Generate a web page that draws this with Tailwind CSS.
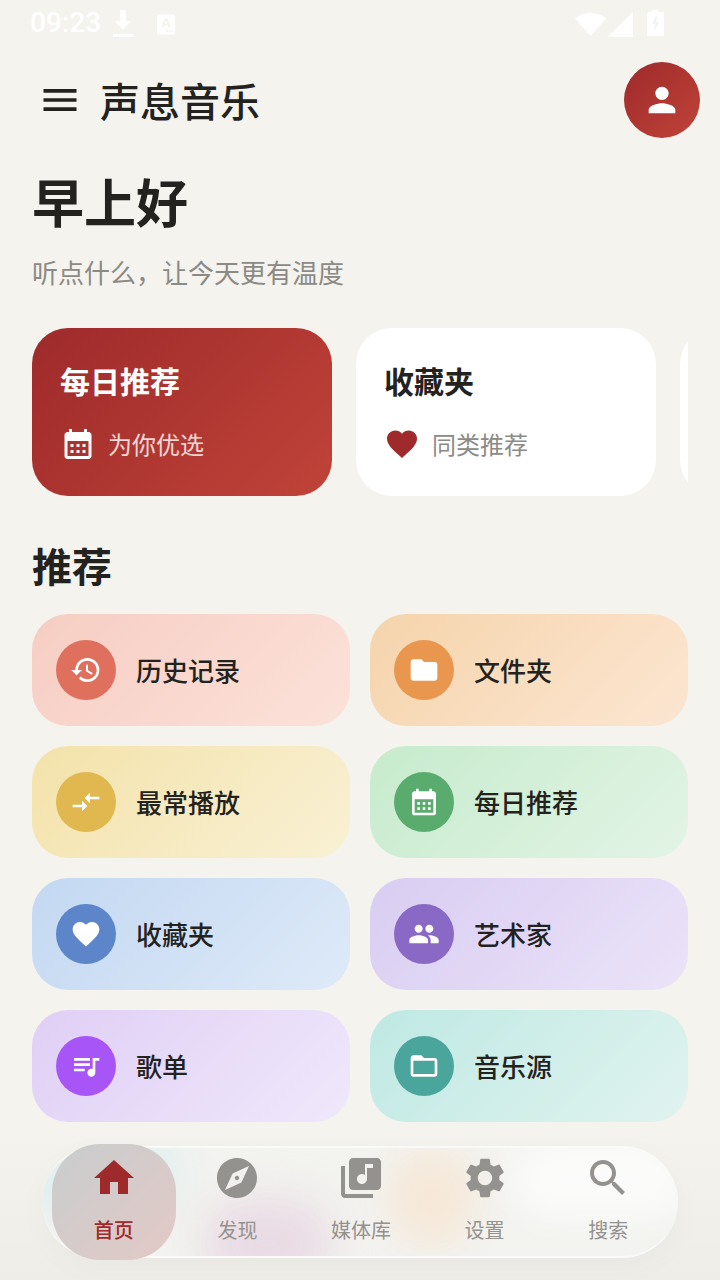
<!DOCTYPE html>
<html lang="zh-CN">
<head>
    <meta charset="UTF-8">
    <meta name="viewport" content="width=device-width, initial-scale=1.0">
    <title>声息音乐</title>
    <script src="https://cdn.jsdelivr.net/npm/@tailwindcss/browser@4"></script>
</head>
<body class="bg-[#f4f3ee]">
<div class="relative w-[720px] h-[1280px] overflow-hidden bg-[#f4f3ee] text-[#23221e] font-['Roboto','Noto_Sans_CJK_SC',sans-serif]">

    <!-- Status bar -->
    <div class="h-[46px] flex items-center pl-[30px] pr-[56px] text-white">
        <span class="text-[28px] leading-[46px] w-[80px] font-medium">09:23</span>
        <svg class="w-[26px] h-[28px] mt-[2px]" viewBox="0 0 26 28" fill="currentColor"><path d="M10 0h6v11h5l-8 9-8-9h5zM3 24h20v3H3z"/></svg>
        <svg class="w-[18px] h-[21px] ml-[21px] mt-[3px]" viewBox="0 0 20 22" fill="currentColor"><path fill-rule="evenodd" d="M2 0h16a2 2 0 0 1 2 2v18a2 2 0 0 1-2 2H2a2 2 0 0 1-2-2V2a2 2 0 0 1 2-2zm6.6 4L5 14h2.2l.7-2h4.2l.7 2H15L11.400 4zm1.400 2.500 1.400 3.900H8.600zM10 17v2h2v-2zm3 0v2h2v-2zm3 0v2h2v-2z"/></svg>
        <div class="flex-1"></div>
        <svg class="w-[31px] h-[23px] mt-[3px]" viewBox="0 0 31 23" fill="currentColor"><path d="M15.500 0C9.500 0 4 2.200 0 5.500L15.500 23 31 5.500C27 2.200 21.500 0 15.500 0z"/></svg>
        <svg class="w-[26px] h-[25px] ml-[2px] mt-[2px]" viewBox="0 0 26 25" fill="currentColor"><path d="M25 0v25H0z"/></svg>
        <svg class="w-[18px] h-[26px] ml-[12px] mt-[-1px]" viewBox="0 0 18 26" fill="currentColor"><path fill-rule="evenodd" d="M6 0h6v2h4a2 2 0 0 1 2 2v22H1V4a2 2 0 0 1 2-2h3zM10 6 6 14h3l-1 7 5-9h-3l1-6z"/></svg>
    </div>

    <!-- Header -->
    <header class="mt-[16px] h-[76px] flex items-center pl-[38px] pr-[20px]">
        <svg class="w-[44px] h-[44px]" viewBox="0 0 24 24" fill="currentColor"><path d="M3 18h18v-2H3v2zm0-5h18v-2H3v2zm0-7v2h18V6H3z"/></svg>
        <h1 class="ml-[18px] text-[40px] leading-[56px] font-medium mt-[8px]">声息音乐</h1>
        <div class="ml-auto w-[76px] h-[76px] rounded-full bg-linear-135 from-[#9e2a2b] to-[#c04338] flex items-center justify-center">
            <svg class="w-[40px] h-[40px] text-white" viewBox="0 0 24 24" fill="currentColor"><path d="M12 12c2.210 0 4-1.790 4-4s-1.790-4-4-4-4 1.790-4 4 1.790 4 4 4zm0 2c-2.670 0-8 1.340-8 4v2h16v-2c0-2.660-5.330-4-8-4z"/></svg>
        </div>
    </header>

    <main class="px-[32px]">
        <h2 class="mt-[32px] text-[52px] leading-[72px] font-bold">早上好</h2>
        <p class="mt-[14px] text-[26px] leading-[36px] text-[#8b8a85]">听点什么，让今天更有温度</p>

        <!-- Featured cards -->
        <div class="mt-[36px] flex gap-[24px] overflow-hidden">
            <div class="w-[300px] h-[168px] shrink-0 rounded-[36px] pl-[28px] pt-[33px] bg-linear-135 from-[#9e2a2b] to-[#c04338] text-white">
                <div class="text-[30px] leading-[44px] font-bold">每日推荐</div>
                <div class="mt-[19px] flex items-center gap-[12px] text-[24px] leading-[36px] text-white/80">
                    <svg class="w-[36px] h-[36px] text-white" viewBox="0 0 24 24" fill="currentColor"><path d="M19 4h-1V2h-2v2H8V2H6v2H5c-1.100 0-2 .9-2 2v14c0 1.100.9 2 2 2h14c1.100 0 2-.9 2-2V6c0-1.100-.9-2-2-2zm0 16H5V10h14v10zM9 14H7v-2h2v2zm4 0h-2v-2h2v2zm4 0h-2v-2h2v2zm-8 4H7v-2h2v2zm4 0h-2v-2h2v2zm4 0h-2v-2h2v2z"/></svg>
                    <span class="mt-[4px]">为你优选</span>
                </div>
            </div>
            <div class="w-[300px] h-[168px] shrink-0 rounded-[36px] pl-[28px] pt-[33px] bg-white">
                <div class="text-[30px] leading-[44px] font-bold">收藏夹</div>
                <div class="mt-[19px] flex items-center gap-[12px] text-[24px] leading-[36px] text-[#8b8a85]">
                    <svg class="w-[36px] h-[36px] text-[#9e2a2b]" viewBox="0 0 24 24" fill="currentColor"><path d="M12 21.350l-1.450-1.320C5.400 15.360 2 12.280 2 8.500 2 5.420 4.420 3 7.500 3c1.740 0 3.410.81 4.500 2.090C13.090 3.810 14.760 3 16.500 3 19.580 3 22 5.420 22 8.500c0 3.780-3.400 6.860-8.550 11.540L12 21.350z"/></svg>
                    <span class="mt-[4px]">同类推荐</span>
                </div>
            </div>
            <div class="w-[300px] h-[168px] shrink-0 rounded-[36px] bg-white"></div>
        </div>

        <h2 class="mt-[49px] text-[40px] leading-[48px] font-bold">推荐</h2>

        <!-- Recommend grid -->
        <div class="mt-[21px] grid grid-cols-2 gap-[20px]">
            <div class="h-[112px] rounded-[36px] flex items-center pl-[24px] gap-[20px] bg-linear-135 from-[#f6cdc3] to-[#fce2d9]">
                <div class="w-[60px] h-[60px] rounded-full bg-[#e0705e] flex items-center justify-center">
                    <svg class="w-[32px] h-[32px] text-white" viewBox="0 0 24 24" fill="currentColor"><path d="M13 3a9 9 0 0 0-9 9H1l3.890 3.890.07.14L9 12H6c0-3.870 3.130-7 7-7s7 3.130 7 7-3.130 7-7 7c-1.930 0-3.680-.79-4.940-2.060l-1.420 1.420A8.954 8.954 0 0 0 13 21a9 9 0 0 0 0-18zm-1 5v5l4.280 2.540.72-1.210-3.500-2.080V8H12z"/></svg>
                </div>
                <span class="mt-[4px] text-[26px] font-medium">历史记录</span>
            </div>
            <div class="h-[112px] rounded-[36px] flex items-center pl-[24px] gap-[20px] bg-linear-135 from-[#f5d4ab] to-[#fce6d2]">
                <div class="w-[60px] h-[60px] rounded-full bg-[#e9964f] flex items-center justify-center">
                    <svg class="w-[32px] h-[32px] text-white" viewBox="0 0 24 24" fill="currentColor"><path d="M10 4H4c-1.100 0-1.990.9-1.990 2L2 18c0 1.100.9 2 2 2h16c1.100 0 2-.9 2-2V8c0-1.100-.9-2-2-2h-8l-2-2z"/></svg>
                </div>
                <span class="mt-[4px] text-[26px] font-medium">文件夹</span>
            </div>
            <div class="h-[112px] rounded-[36px] flex items-center pl-[24px] gap-[20px] bg-linear-135 from-[#f3e2a9] to-[#f9f1d5]">
                <div class="w-[60px] h-[60px] rounded-full bg-[#e0b84f] flex items-center justify-center">
                    <svg class="w-[32px] h-[32px] text-white" viewBox="0 0 24 24" fill="currentColor"><path d="M9.010 14H2v2h7.010v3L13 15l-3.990-4v3zm5.980-1v-3H22V8h-7.010V5L11 9l3.990 4z"/></svg>
                </div>
                <span class="mt-[4px] text-[26px] font-medium">最常播放</span>
            </div>
            <div class="h-[112px] rounded-[36px] flex items-center pl-[24px] gap-[20px] bg-linear-135 from-[#c6ebcc] to-[#e3f4e6]">
                <div class="w-[60px] h-[60px] rounded-full bg-[#5aab6e] flex items-center justify-center">
                    <svg class="w-[32px] h-[32px] text-white" viewBox="0 0 24 24" fill="currentColor"><path d="M19 4h-1V2h-2v2H8V2H6v2H5c-1.100 0-2 .9-2 2v14c0 1.100.9 2 2 2h14c1.100 0 2-.9 2-2V6c0-1.100-.9-2-2-2zm0 16H5V10h14v10zM9 14H7v-2h2v2zm4 0h-2v-2h2v2zm4 0h-2v-2h2v2zm-8 4H7v-2h2v2zm4 0h-2v-2h2v2zm4 0h-2v-2h2v2z"/></svg>
                </div>
                <span class="mt-[4px] text-[26px] font-medium">每日推荐</span>
            </div>
            <div class="h-[112px] rounded-[36px] flex items-center pl-[24px] gap-[20px] bg-linear-135 from-[#c3d8f2] to-[#deeaf8]">
                <div class="w-[60px] h-[60px] rounded-full bg-[#5c86c9] flex items-center justify-center">
                    <svg class="w-[32px] h-[32px] text-white" viewBox="0 0 24 24" fill="currentColor"><path d="M12 21.350l-1.450-1.320C5.400 15.360 2 12.280 2 8.500 2 5.420 4.420 3 7.500 3c1.740 0 3.410.81 4.500 2.090C13.090 3.810 14.760 3 16.500 3 19.580 3 22 5.420 22 8.500c0 3.780-3.400 6.860-8.550 11.540L12 21.350z"/></svg>
                </div>
                <span class="mt-[4px] text-[26px] font-medium">收藏夹</span>
            </div>
            <div class="h-[112px] rounded-[36px] flex items-center pl-[24px] gap-[20px] bg-linear-135 from-[#d9cdf2] to-[#ebe3f8]">
                <div class="w-[60px] h-[60px] rounded-full bg-[#8a68c5] flex items-center justify-center">
                    <svg class="w-[32px] h-[32px] text-white" viewBox="0 0 24 24" fill="currentColor"><path d="M16 11c1.660 0 2.990-1.340 2.990-3S17.660 5 16 5c-1.660 0-3 1.340-3 3s1.340 3 3 3zm-8 0c1.660 0 2.990-1.340 2.990-3S9.660 5 8 5C6.340 5 5 6.340 5 8s1.340 3 3 3zm0 2c-2.330 0-7 1.170-7 3.500V19h14v-2.500c0-2.330-4.670-3.500-7-3.500zm8 0c-.29 0-.62.02-.97.05 1.160.84 1.970 1.970 1.970 3.450V19h6v-2.500c0-2.330-4.670-3.500-7-3.500z"/></svg>
                </div>
                <span class="mt-[4px] text-[26px] font-medium">艺术家</span>
            </div>
            <div class="h-[112px] rounded-[36px] flex items-center pl-[24px] gap-[20px] bg-linear-135 from-[#e0cff5] to-[#f0e8fb]">
                <div class="w-[60px] h-[60px] rounded-full bg-[#a855f7] flex items-center justify-center">
                    <svg class="w-[32px] h-[32px] text-white" viewBox="0 0 24 24" fill="currentColor"><path d="M15 6H3v2h12V6zm0 4H3v2h12v-2zM3 16h8v-2H3v2zM17 6v8.180c-.31-.11-.65-.18-1-.18-1.660 0-3 1.340-3 3s1.340 3 3 3 3-1.340 3-3V8h3V6h-5z"/></svg>
                </div>
                <span class="mt-[4px] text-[26px] font-medium">歌单</span>
            </div>
            <div class="h-[112px] rounded-[36px] flex items-center pl-[24px] gap-[20px] bg-linear-135 from-[#bfe9e4] to-[#e0f3ef]">
                <div class="w-[60px] h-[60px] rounded-full bg-[#4aa59d] flex items-center justify-center">
                    <svg class="w-[32px] h-[32px] text-white" viewBox="0 0 24 24" fill="currentColor"><path d="M20 6h-8l-2-2H4c-1.100 0-1.990.9-1.990 2L2 18c0 1.100.9 2 2 2h16c1.100 0 2-.9 2-2V8c0-1.100-.9-2-2-2zm0 12H4V8h16v10z"/></svg>
                </div>
                <span class="mt-[4px] text-[26px] font-medium">音乐源</span>
            </div>
        </div>
    </main>

    <!-- Bottom navigation, floats over the page -->
    <div class="absolute left-0 right-0 bottom-0 h-[150px] bg-linear-to-b from-[#f4f3ee]/0 to-[#eeede7]"></div>
    <nav class="absolute left-[42px] top-[1146px] w-[636px] h-[112px] flex pl-[10px] pr-[8px] shadow-[0_8px_30px_rgba(0,0,0,0.03)] rounded-[56px]">
        <div class="absolute inset-0 rounded-[56px] overflow-hidden bg-[#f3f3f0] border-y-2 border-white/60">
            <div class="absolute left-[-30px] top-[-20px] w-[170px] h-[90px] rounded-full bg-[#dcefef]/80 blur-[18px]"></div>
            <div class="absolute left-[160px] top-[50px] w-[130px] h-[90px] rounded-full bg-[#e6d2e0]/70 blur-[20px]"></div>
            <div class="absolute left-[345px] top-[0px] w-[90px] h-[100px] rounded-full bg-[#f6e4cf]/70 blur-[18px]"></div>
            <div class="absolute left-[470px] top-[-10px] w-[180px] h-[80px] rounded-full bg-white/70 blur-[18px]"></div>
        </div>
        <div class="relative flex-1 -my-[2px] rounded-[48px] bg-linear-135 from-[#c8cdce] to-[#e3c9c6] flex flex-col items-center pt-[10px] text-[#9e2a2b]">
            <svg class="w-[48px] h-[48px]" viewBox="0 0 24 24" fill="currentColor"><path d="M10 20v-6h4v6h5v-8h3L12 3 2 12h3v8z"/></svg>
            <span class="mt-[14px] text-[20px] leading-[30px] font-medium">首页</span>
        </div>
        <div class="relative flex-1 -my-[2px] flex flex-col items-center pt-[10px] text-[#94928e]">
            <svg class="w-[48px] h-[48px]" viewBox="0 0 24 24" fill="currentColor"><path d="M12 10.900c-.61 0-1.100.49-1.100 1.100s.49 1.100 1.100 1.100c.61 0 1.100-.49 1.100-1.100s-.49-1.100-1.100-1.100zM12 2C6.480 2 2 6.480 2 12s4.480 10 10 10 10-4.480 10-10S17.520 2 12 2zm2.190 12.190L6 18l3.810-8.190L18 6l-3.810 8.190z"/></svg>
            <span class="mt-[14px] text-[20px] leading-[30px]">发现</span>
        </div>
        <div class="relative flex-1 -my-[2px] flex flex-col items-center pt-[10px] text-[#94928e]">
            <svg class="w-[48px] h-[48px]" viewBox="0 0 24 24" fill="currentColor"><path d="M20 2H8c-1.100 0-2 .9-2 2v12c0 1.100.9 2 2 2h12c1.100 0 2-.9 2-2V4c0-1.100-.9-2-2-2zm-2 5h-3v5.500c0 1.380-1.120 2.500-2.500 2.500S10 13.880 10 12.500s1.120-2.500 2.500-2.500c.57 0 1.080.19 1.500.51V5h4v2zM4 6H2v14c0 1.100.9 2 2 2h14v-2H4V6z"/></svg>
            <span class="mt-[14px] text-[20px] leading-[30px]">媒体库</span>
        </div>
        <div class="relative flex-1 -my-[2px] flex flex-col items-center pt-[10px] text-[#94928e]">
            <svg class="w-[48px] h-[48px]" viewBox="0 0 24 24" fill="currentColor"><path d="M19.140 12.940c.04-.3.06-.61.06-.94 0-.32-.02-.64-.07-.94l2.030-1.580c.18-.14.23-.41.12-.61l-1.920-3.320c-.12-.22-.37-.29-.59-.22l-2.390.96c-.5-.38-1.030-.7-1.620-.94l-.36-2.540c-.04-.24-.24-.41-.48-.41h-3.840c-.24 0-.43.17-.47.41l-.36 2.540c-.59.24-1.130.57-1.620.94l-2.390-.96c-.22-.08-.47 0-.59.22L2.740 8.870c-.12.21-.08.47.12.61l2.030 1.580c-.05.3-.09.63-.09.94s.02.64.07.94l-2.030 1.580c-.18.14-.23.41-.12.61l1.920 3.320c.12.22.37.29.59.22l2.390-.96c.5.38 1.030.7 1.620.94l.36 2.540c.05.24.24.41.48.41h3.840c.24 0 .44-.17.47-.41l.36-2.540c.59-.24 1.130-.56 1.620-.94l2.390.96c.22.08.47 0 .59-.22l1.920-3.320c.12-.22.07-.47-.12-.61l-2.010-1.580zM12 15.600c-1.980 0-3.600-1.620-3.600-3.600s1.620-3.600 3.600-3.600 3.600 1.620 3.600 3.600-1.620 3.600-3.600 3.600z"/></svg>
            <span class="mt-[14px] text-[20px] leading-[30px]">设置</span>
        </div>
        <div class="relative flex-1 -my-[2px] flex flex-col items-center pt-[10px] text-[#94928e]">
            <svg class="w-[48px] h-[48px]" viewBox="0 0 24 24" fill="currentColor"><path d="M15.500 14h-.79l-.28-.27C15.410 12.590 16 11.110 16 9.500 16 5.910 13.090 3 9.500 3S3 5.910 3 9.500 5.910 16 9.500 16c1.610 0 3.090-.59 4.230-1.570l.27.28v.79l5 4.990L20.490 19l-4.990-5zm-6 0C7.010 14 5 11.990 5 9.500S7.010 5 9.500 5 14 7.010 14 9.500 11.990 14 9.500 14z"/></svg>
            <span class="mt-[14px] text-[20px] leading-[30px]">搜索</span>
        </div>
    </nav>
</div>
</body>
</html>
